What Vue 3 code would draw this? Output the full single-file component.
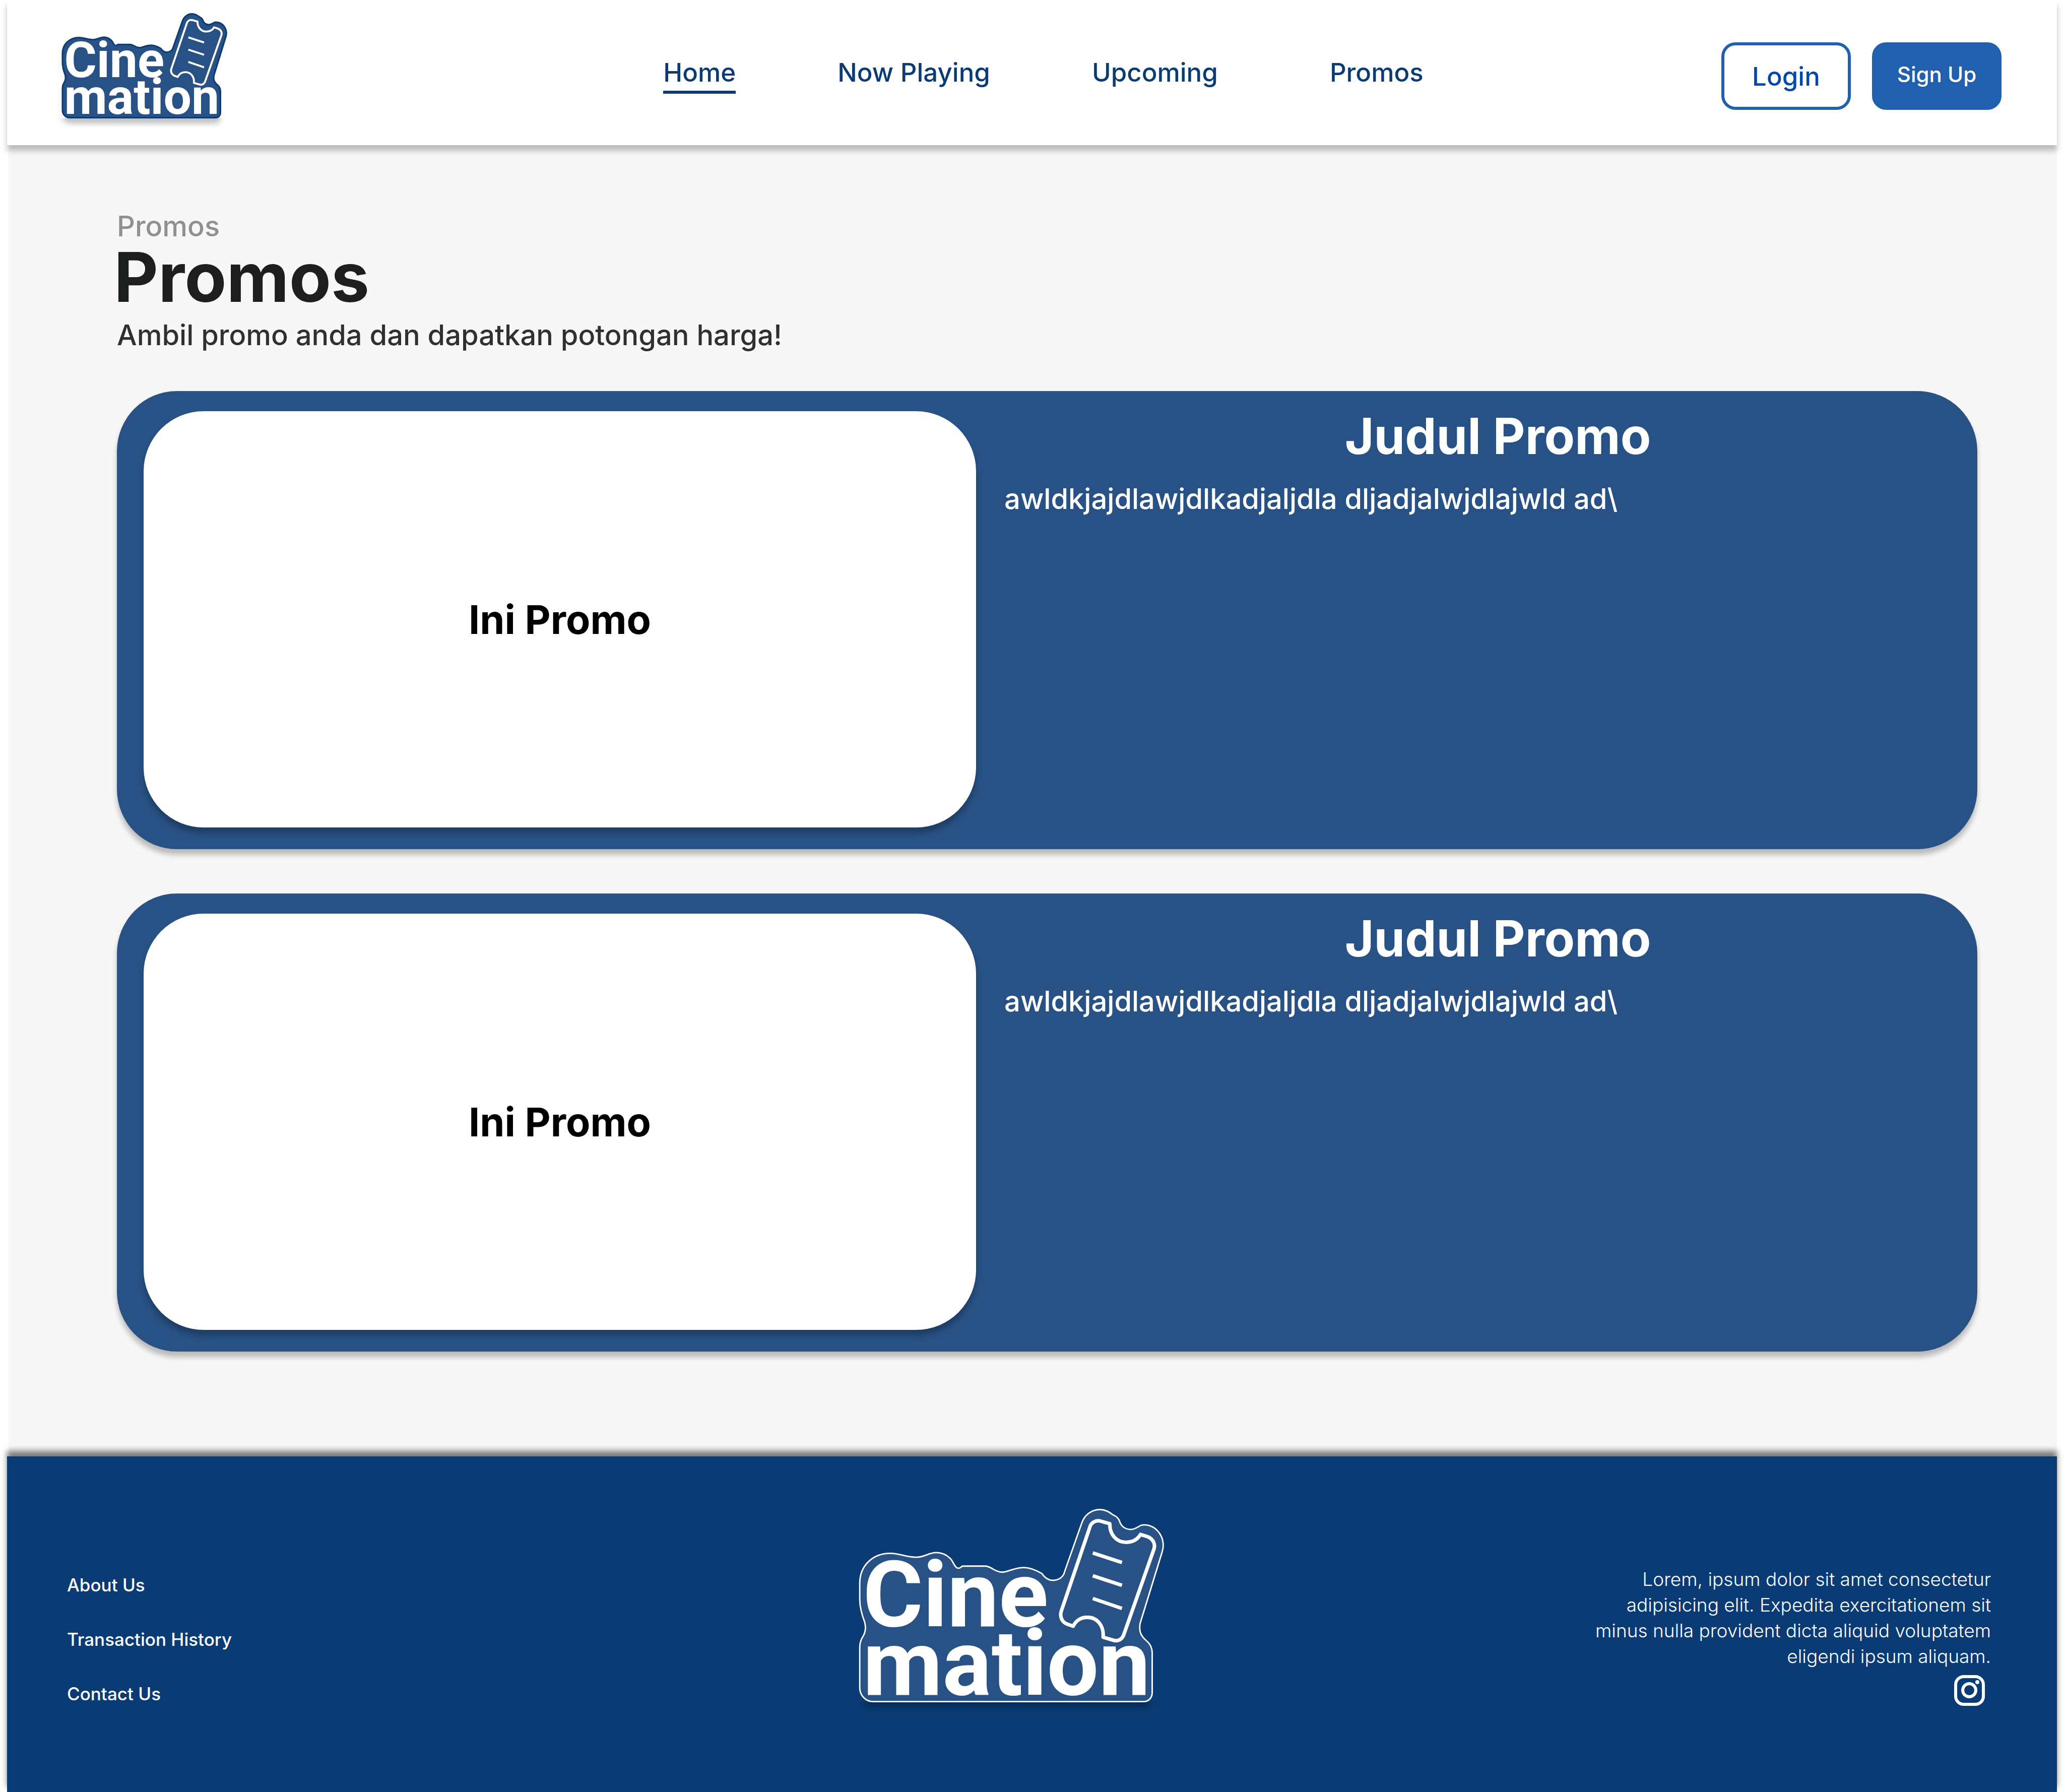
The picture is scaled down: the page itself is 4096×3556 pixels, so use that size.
<script setup>
import { h } from 'vue'

const navLinks = ['Home', 'Now Playing', 'Upcoming', 'Promos']
const footerLinks = ['About Us', 'Transaction History', 'Contact Us']
const promos = [
  { id: 1, image: 'Ini Promo', title: 'Judul Promo', text: 'awldkjajdlawjdlkadjaljdla dljadjalwjdlajwld ad\\' },
  { id: 2, image: 'Ini Promo', title: 'Judul Promo', text: 'awldkjajdlawjdlkadjaljdla dljadjalwjdlajwld ad\\' },
]

const outline =
  'M37 249 C37 201 72 165 123 165 C147 165 172 177 196 176 C220 176 230 163 252 163 C268 163 282 170 292 180 ' +
  'C301 190 304 207 315 207 C321 207 322 201 327 201 H390 C398 201 404 205 411 209 C419 214 427 218 438 218 ' +
  'C447 218 455 214 465 211 C475 208 485 205 498 205 C518 205 534 213 549 222 C555 231 565 241 580 241 ' +
  'C597 241 610 231 613 216 L661 80 C668 58 688 42 712 42 C727 42 738 49 749 57 C758 61 764 66 767 74 ' +
  'C771 88 782 98 799 98 C808 98 814 94 821 90 C825 87 830 85 836 85 C868 85 890 113 890 143 C890 149 889 155 887 161 ' +
  'L826 359 C824 364 824 370 824 376 C824 389 831 401 842 410 C853 419 859 431 859 445 V557 C859 571 849 582 835 582 ' +
  'H75 C53 582 37 564 37 543 V429 C37 420 39 412 43 404 C50 394 53 384 53 374 C53 369 52 364 51 359 ' +
  'C43 338 37 316 37 294 Z'
const ticket =
  'M685 88 C689 78 700 72 712 74 L740 82 C739 110 757 134 785 134 C805 134 818 126 826 112 L845 118 ' +
  'C860 123 869 138 864 153 L779 394 C775 406 763 413 752 410 L721 401 C724 370 705 345 677 345 ' +
  'C658 345 644 355 637 370 L620 364 C605 358 598 342 604 326 Z'

const BrandLogo = (props) =>
  h('svg', { viewBox: '24 30 881 554', role: 'img', 'aria-label': 'Cinemation' }, [
    h('path', {
      d: outline,
      transform: `translate(0 ${props.drop})`,
      style: { filter: `blur(${props.drop / 2}px)`, opacity: 0.25 },
    }),
    h('rect', { x: 24, y: 30, width: 881, height: 554, fill: props.backdrop }),
    h('path', { d: outline, fill: '#285285', stroke: props.edge, 'stroke-width': props.edgeWidth }),
    h('g', { fill: '#fff', 'font-family': 'Roboto, sans-serif', 'font-size': 258, 'font-weight': 700 }, [
      h('text', { x: 46, y: 370 }, 'Cine'),
      h('text', { x: 46, y: 562 }, 'mation'),
    ]),
    h('path', {
      d: ticket + ' M692 164 L774 191 M692 228 L774 255 M692 292 L774 320',
      fill: 'none',
      stroke: '#fff',
      'stroke-width': 10,
      'stroke-linejoin': 'round',
    }),
  ])
BrandLogo.props = ['backdrop', 'edge', 'edgeWidth', 'drop']
</script>

<template>
  <div class="page">
    <header class="topbar">
      <a href="#" class="brand"><BrandLogo class="logo" backdrop="#ffffff" edge="#0a3b75" :edge-width="8" :drop="30" /></a>
      <nav class="nav">
        <a v-for="(link, i) in navLinks" :key="link" href="#" :class="{ active: i === 0 }">{{ link }}</a>
      </nav>
      <div class="actions">
        <button type="button" class="btn login">Login</button>
        <button type="button" class="btn signup">Sign Up</button>
      </div>
    </header>

    <main class="content">
      <p class="crumb">Promos</p>
      <h1>Promos</h1>
      <p class="lead">Ambil promo anda dan dapatkan potongan harga!</p>
      <section class="promos">
        <article v-for="promo in promos" :key="promo.id" class="card">
          <div class="banner">{{ promo.image }}</div>
          <div class="details">
            <h2>{{ promo.title }}</h2>
            <p>{{ promo.text }}</p>
          </div>
        </article>
      </section>
    </main>

    <footer class="footer">
      <ul class="links">
        <li v-for="link in footerLinks" :key="link"><a href="#">{{ link }}</a></li>
      </ul>
      <BrandLogo class="footer-logo" backdrop="#0a3b75" edge="#ffffff" :edge-width="4" :drop="16" />
      <div class="about">
        <p>Lorem, ipsum dolor sit amet consectetur adipisicing elit. Expedita exercitationem sit minus nulla provident dicta aliquid voluptatem eligendi ipsum aliquam.</p>
        <a href="#" class="social" aria-label="Instagram">
          <svg viewBox="0 0 61 61" fill="none" stroke="#fff">
            <rect x="3" y="3" width="55" height="55" rx="16" stroke-width="6" />
            <circle cx="30" cy="30" r="13" stroke-width="6" />
            <circle cx="46" cy="14" r="4" fill="#fff" stroke="none" />
          </svg>
        </a>
      </div>
    </footer>
  </div>
</template>

<style>
body {
  margin: 0;
  background: #fff;
}
</style>

<style scoped>
.page {
  display: flex;
  flex-direction: column;
  min-height: 100vh;
  padding: 0 14px;
  box-sizing: border-box;
  overflow: hidden;
  font-family: Inter, sans-serif;
  font-weight: 500;
}
p, h1, h2, ul {
  margin: 0;
  padding: 0;
}
a {
  color: inherit;
  text-decoration: none;
}
.topbar {
  position: relative;
  display: grid;
  grid-template-columns: 1fr auto 1fr;
  align-items: center;
  height: 288px;
  padding: 0 110px 0 105px;
  box-sizing: border-box;
  background: #fff;
  box-shadow: 0 11px 11px rgba(0, 0, 0, 0.25);
}
.brand {
  display: block;
  width: 336px;
  padding-bottom: 31px;
}
.logo {
  display: block;
  width: 336px;
  overflow: visible;
}
.nav {
  display: flex;
  gap: 202px;
  padding-left: 50px;
  font-size: 51px;
  line-height: 62px;
  color: #0a3b75;
}
.nav a {
  padding: 11px 0 5px;
  border-bottom: 6px solid transparent;
}
.nav a:last-child {
  margin-left: 20px;
}
.nav .active {
  border-color: #0a3b75;
}
.actions {
  display: flex;
  justify-content: flex-end;
  gap: 42px;
  padding-top: 14px;
}
.btn {
  width: 257px;
  height: 134px;
  padding: 0;
  border: 6px solid #2160ae;
  border-radius: 28px;
  font-family: inherit;
  font-weight: 500;
}
.login {
  background: #fff;
  color: #0048ad;
  font-size: 51px;
}
.signup {
  padding-bottom: 8px;
  background: #2160ae;
  color: #fff;
  font-size: 42px;
}
.content {
  flex: 1;
  margin-left: 3px;
  padding: 126px 158px 204px 215px;
  background: #f7f7f7;
}
.crumb, .lead {
  font-size: 56px;
  line-height: 70px;
}
.crumb {
  color: #909090;
}
.lead {
  color: #303030;
}
h1 {
  margin: 0 0 14px -6px;
  font-size: 136px;
  line-height: 132px;
  font-weight: 700;
  color: #1d1f1e;
}
.promos {
  display: flex;
  flex-direction: column;
  gap: 88px;
  margin-top: 76px;
}
.card {
  display: flex;
  gap: 56px;
  padding: 40px 0 43px 53px;
  border-radius: 119px;
  background: #285285;
  color: #fff;
  box-shadow: 0 11px 11px rgba(0, 0, 0, 0.25);
}
.banner {
  display: flex;
  flex: 0 0 45.4%;
  align-items: center;
  justify-content: center;
  aspect-ratio: 2 / 1;
  border-radius: 119px;
  background: #fff;
  box-shadow: 0 11px 11px rgba(0, 0, 0, 0.25);
  color: #000;
  font-size: 79px;
  font-weight: 700;
}
.details {
  flex: 1;
}
h2 {
  padding-left: 28px;
  font-size: 99px;
  line-height: 98px;
  font-weight: 700;
  text-align: center;
}
.details p {
  margin-top: 41px;
  font-size: 56px;
  line-height: 70px;
}
.footer {
  position: relative;
  display: grid;
  grid-template-columns: 1fr auto 1fr;
  height: 666px;
  padding: 97px 131px 0 119px;
  box-sizing: border-box;
  background: #0a3b75;
  color: #fff;
  box-shadow: 0 -11px 11px rgba(0, 0, 0, 0.5);
}
.links {
  padding-top: 104px;
  list-style: none;
  font-size: 35px;
  line-height: 108px;
}
.footer-logo {
  display: block;
  width: 622px;
  margin-right: 68px;
  overflow: visible;
}
.about {
  justify-self: end;
  width: 800px;
  padding-top: 121px;
  font-size: 37px;
  line-height: 51px;
  font-weight: 300;
  text-align: right;
}
.social {
  display: block;
  width: 61px;
  margin: 12px 12px 0 auto;
}
.social svg {
  display: block;
}
</style>
